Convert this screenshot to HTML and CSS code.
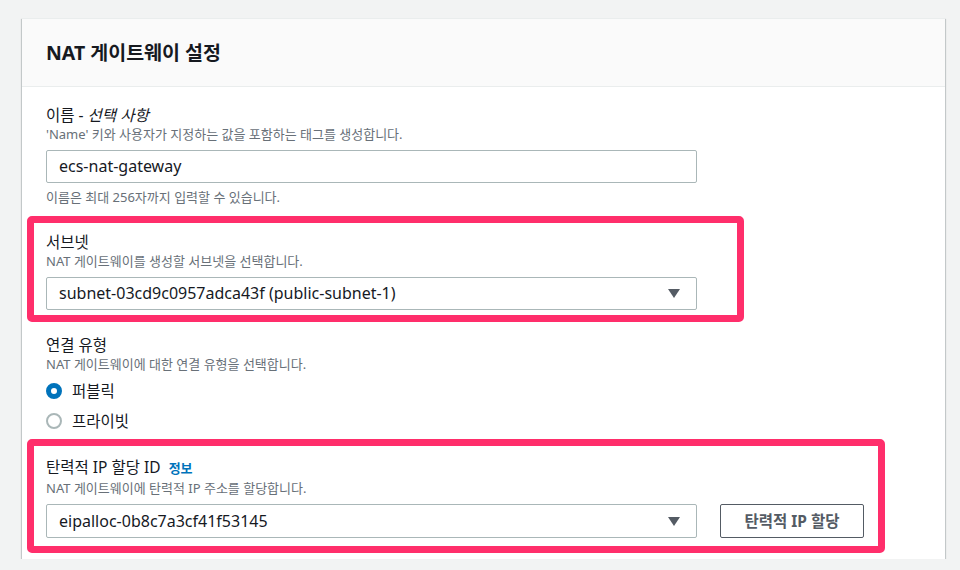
FILE: index.html
```html
<!DOCTYPE html>
<html>
	<head>
		<meta charset="UTF-8">
		<title>NAT 게이트웨이 설정</title>
		<link rel="stylesheet" href="styles.css">
	</head>
	<body>
		<div class="panel">
			<div class="panel-header">
				<h2>NAT 게이트웨이 설정</h2>
			</div>
			<div class="panel-body">
				<!-- 이름 -->
				<div class="field">
					<div class="label">이름 - <i>선택 사항</i></div>
					<div class="desc">'Name' 키와 사용자가 지정하는 값을 포함하는 태그를 생성합니다.</div>
					<div class="input">ecs-nat-gateway</div>
					<div class="hint">이름은 최대 256자까지 입력할 수 있습니다.</div>
				</div>
				<!-- 서브넷 -->
				<div class="mark mark-subnet">
					<div class="label">서브넷</div>
					<div class="desc">NAT 게이트웨이를 생성할 서브넷을 선택합니다.</div>
					<div class="input select">
						<span>subnet-03cd9c0957adca43f (public-subnet-1)</span>
						<i class="caret"></i>
					</div>
				</div>
				<!-- 연결 유형 -->
				<div class="field field-type">
					<div class="label">연결 유형</div>
					<div class="desc">NAT 게이트웨이에 대한 연결 유형을 선택합니다.</div>
					<div class="radios">
						<div class="radio on"><i></i>퍼블릭</div>
						<div class="radio"><i></i>프라이빗</div>
					</div>
				</div>
				<!-- 탄력적 IP -->
				<div class="mark mark-eip">
					<div class="label">탄력적 IP 할당 ID <a href="javascript:;" class="info">정보</a></div>
					<div class="desc">NAT 게이트웨이에 탄력적 IP 주소를 할당합니다.</div>
					<div class="row">
						<div class="input select">
							<span>eipalloc-0b8c7a3cf41f53145</span>
							<i class="caret"></i>
						</div>
						<a href="javascript:;" class="btn">탄력적 IP 할당</a>
					</div>
				</div>
			</div>
		</div>
	</body>
</html>
```

FILE: styles.css
```css
*{
	margin: 0;
	padding: 0;
	box-sizing: border-box;
}
body{
	background: #f2f3f3;
	padding: 18px 0 0 22px;
	font-family: "Noto Sans", "Noto Sans CJK KR", sans-serif;
	color: #16191f;
}
.panel{
	width: 923px;
	height: 541px;
	background: #fff;
	border-top: 1px solid #eaeded;
	box-shadow: 0 1px 1px 0 rgba(0,28,36,.3), 1px 1px 1px 0 rgba(0,28,36,.15), -1px 1px 1px 0 rgba(0,28,36,.15);
}
.panel-header{
	height: 68px;
	background: #fafafa;
	border-bottom: 1px solid #eaeded;
	padding-left: 24px;
	display: flex;
	align-items: center;
}
.panel-header h2{
	font-size: 19.5px;
	font-weight: bold;
	line-height: 24px;
	padding-top: 1px;
}
.panel-body{
	padding: 17px 24px 0 24px;
}
.label{
	font-size: 15.5px;
	line-height: 22px;
}
.label i{
	font-style: italic;
}
.desc, .hint{
	font-size: 13px;
	line-height: 16px;
	color: #687078;
}
.input{
	width: 651px;
	height: 33px;
	margin-top: 8px;
	border: 1px solid #aab7b8;
	border-radius: 2px;
	padding: 0 12px;
	font-size: 16px;
	line-height: 31px;
	color: #16191f;
}
.hint{
	margin-top: 6px;
}
.select{
	display: flex;
	justify-content: space-between;
	align-items: center;
}
.caret{
	width: 0;
	height: 0;
	border-left: 6px solid transparent;
	border-right: 6px solid transparent;
	border-top: 9px solid #545b64;
	margin-right: 4px;
}
.mark{
	border: 7px solid #ff2e6b;
	border-radius: 5px;
	margin-left: -19px;
	padding-left: 12px;
}
.mark-subnet{
	width: 717px;
	margin-top: 11px;
	padding-top: 8px;
	padding-bottom: 5px;
}
.field-type{
	margin-top: 12px;
}
.radios{
	margin-top: 8px;
	display: flex;
	flex-direction: column;
	gap: 8px;
}
.radio{
	display: flex;
	align-items: center;
	font-size: 15.5px;
	line-height: 22px;
}
.radio i{
	width: 16px;
	height: 16px;
	border-radius: 50%;
	border: 2px solid #aab7b8;
	margin-right: 10px;
}
.radio.on i{
	border: 5px solid #0073bb;
}
.mark-eip{
	width: 858px;
	margin-top: 7px;
	padding-top: 10px;
	padding-bottom: 8px;
}
.mark-eip .desc{
	margin-top: 1px;
}
.info{
	color: #0073bb;
	font-size: 13px;
	font-weight: bold;
	text-decoration: none;
	margin-left: 4px;
}
.row{
	display: flex;
	align-items: flex-end;
	gap: 23px;
}
.row .input{
	height: 34px;
	line-height: 32px;
}
.btn{
	width: 144px;
	height: 34px;
	border: 1px solid #545b64;
	border-radius: 2px;
	color: #545b64;
	font-size: 15.5px;
	font-weight: bold;
	text-align: center;
	line-height: 32px;
	text-decoration: none;
}
```
